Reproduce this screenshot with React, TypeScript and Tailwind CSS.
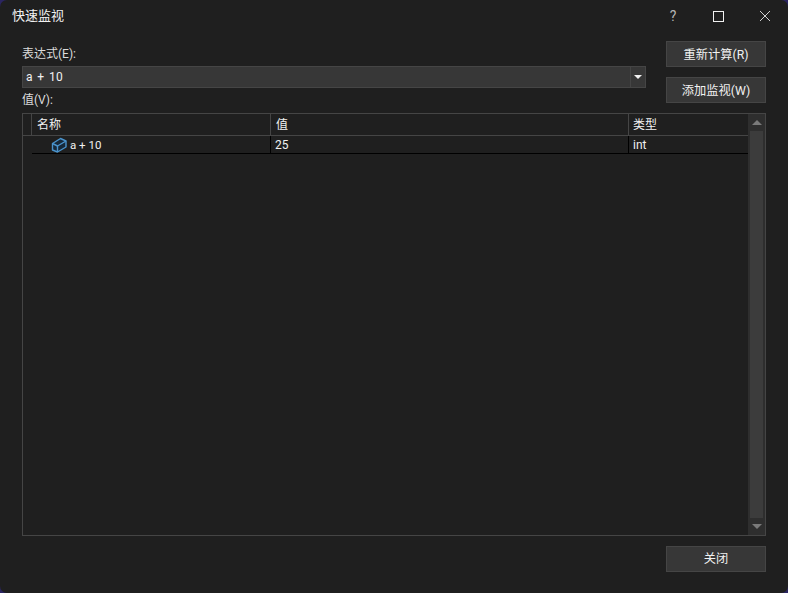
import React from "react";

const cjk = "font-['Roboto','Noto_Sans_CJK_SC',sans-serif]";

const DialogButton = ({ label }: { label: string }) => (
  <button className="h-[26px] w-[100px] border border-[#454545] bg-[#373737] pt-px text-[12.25px] leading-[24px] text-[#f1f1f1]">
    {label}
  </button>
);

// blue box icon next to the watch expression
const BoxIcon = () => (
  <svg width="16" height="16" viewBox="0 0 16 16" fill="none" stroke="#4a93cc" strokeWidth="1.4" strokeLinejoin="round">
    <path d="M1.5 6.5 L9.5 1.5 L15 4 V10 L6.5 15 L1.5 13 Z" fill="#16293a" />
    <path d="M1.5 6.5 L6.5 9 L15 4" />
    <path d="M6.5 9 V15" />
  </svg>
);

export default function App() {
  return (
    <div className={`h-[593px] w-[788px] overflow-hidden bg-[#2b2560] ${cjk}`}>
      <div className="flex h-full w-full flex-col rounded-[7px] bg-[#1f1f1f] text-[#f1f1f1]">
        <div className="flex h-[41px] items-start">
          <div className="pl-3 pt-[7px] text-[13px] leading-[18px] text-[#f1f1f1]">快速监视</div>
          <div className="ml-auto flex items-center pt-[9px]">
            <span className="w-[14px] text-center text-[14px] leading-[14px] text-[#b5b5b5]">?</span>
            <svg className="ml-[33px]" width="11" height="11" viewBox="0 0 11 11" fill="none" stroke="#f1f1f1" strokeWidth="1">
              <rect x="0.5" y="0.5" width="10" height="10" />
            </svg>
            <svg className="ml-[35px] mr-[17px]" width="12" height="12" viewBox="0 0 12 12" fill="none" stroke="#d0d0d0" strokeWidth="1">
              <path d="M1 1 L11 11 M11 1 L1 11" />
            </svg>
          </div>
        </div>

        <div className="flex flex-col px-[22px]">
          <div className="flex h-[72px] gap-5">
            <div className="flex flex-1 flex-col">
              <label className="h-[25px] pt-[5px] text-[12px] leading-[16px] text-[#dcdcdc]">表达式(E):</label>
              <div className="flex h-[22px] border border-[#454545] bg-[#373737]">
                <span className="flex-1 pl-[3px] text-[12px] leading-[20px] tracking-[0.4px] [word-spacing:1px]">a + 10</span>
                <div className="flex w-[15px] items-center justify-center border-l border-[#454545]">
                  <div className="h-0 w-0 border-x-[4px] border-t-[4px] border-x-transparent border-t-[#f1f1f1]" />
                </div>
              </div>
              <label className="h-[25px] pt-[4px] text-[12px] leading-[16px] text-[#dcdcdc]">值(V):</label>
            </div>
            <div className="flex w-[100px] flex-col gap-[10px]">
              <DialogButton label="重新计算(R)" />
              <DialogButton label="添加监视(W)" />
            </div>
          </div>

          <div className="flex h-[423px] border border-[#454545]">
            <div className="flex-1 text-[12px]">
              <div className="flex h-[22px] border-b border-[#454545] leading-[23px]">
                <div className="w-[9px] border-r border-[#454545]" />
                <div className="w-[239px] border-r border-[#454545] pl-[5px]">名称</div>
                <div className="w-[358px] border-r border-[#454545] pl-[5px]">值</div>
                <div className="flex-1 pl-[4px]">类型</div>
              </div>
              <div className="ml-[9px] flex h-[18px] border-b border-black leading-[19px]">
                <div className="flex w-[239px] items-center border-r border-black pl-[19px]">
                  <BoxIcon />
                  <span className="ml-[3px] pt-px text-[11.5px]">a + 10</span>
                </div>
                <div className="w-[358px] border-r border-black pl-[4px]">25</div>
                <div className="flex-1 pl-[4px]">int</div>
              </div>
            </div>
            <div className="flex w-[17px] flex-col items-center bg-[#2e2e2e]">
              <div className="flex h-[17px] items-center justify-center">
                <div className="h-0 w-0 border-x-[5px] border-b-[5px] border-x-transparent border-b-[#7a7a7a]" />
              </div>
              <div className="w-[13px] flex-1 bg-[#3c3c3c]" />
              <div className="flex h-[17px] items-center justify-center">
                <div className="h-0 w-0 border-x-[5px] border-t-[5px] border-x-transparent border-t-[#7a7a7a]" />
              </div>
            </div>
          </div>

          <div className="mt-[10px] flex justify-end">
            <button className="h-[26px] w-[100px] border border-[#454545] bg-[#373737] pt-px text-[12.25px] text-[#f1f1f1]">关闭</button>
          </div>
        </div>
      </div>
    </div>
  );
}
